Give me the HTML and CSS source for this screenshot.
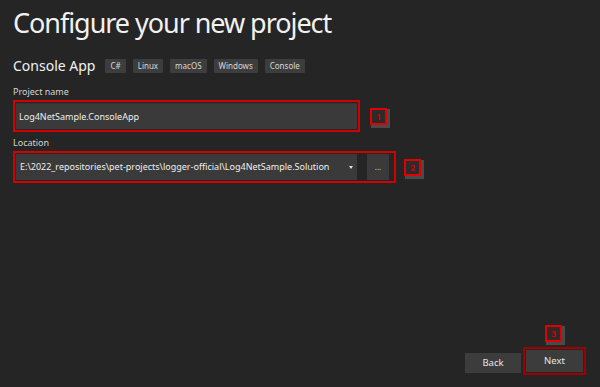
FILE: index.html
```html
<!DOCTYPE html>
<html>
<head>
<meta charset="utf-8">
<link rel="stylesheet" href="styles.css">
</head>
<body>
<div class="page">
  <h1 class="title">Configure your new project</h1>
  <div class="template">
    <span class="template-name">Console App</span>
    <span class="tag">C#</span>
    <span class="tag">Linux</span>
    <span class="tag">macOS</span>
    <span class="tag">Windows</span>
    <span class="tag">Console</span>
  </div>

  <div class="label label-name">Project name</div>
  <div class="row">
    <div class="hl hl-name">
      <div class="input input-name">Log4NetSample.ConsoleApp</div>
    </div>
    <div class="badge badge-1">1</div>
  </div>

  <div class="label label-loc">Location</div>
  <div class="row">
    <div class="hl hl-loc">
      <div class="input input-loc">
        <span>E:\2022_repositories\pet-projects\logger-official\Log4NetSample.Solution</span>
        <span class="caret"></span>
      </div>
      <div class="browse">...</div>
    </div>
    <div class="badge badge-2">2</div>
  </div>

  <div class="footer">
    <div class="btn btn-back">Back</div>
    <div class="next-wrap">
      <div class="badge badge-3">3</div>
      <div class="hl hl-next">
        <div class="btn">Next</div>
      </div>
    </div>
  </div>
</div>
</body>
</html>
```
FILE: styles.css
```css
html, body {
  margin: 0;
  padding: 0;
  background: #252526;
}
.page {
  box-sizing: border-box;
  height: 387px;
  padding: 0 13px;
  display: flex;
  flex-direction: column;
  font-family: "Noto Sans", "Open Sans", sans-serif;
  color: #e6e6e6;
}
.title {
  margin: 5px 0 0 0;
  font-weight: 400;
  font-size: 27px;
  line-height: 36px;
  color: #f1f1f1;
  letter-spacing: -1.05px;
}
.template {
  display: flex;
  align-items: center;
  margin-top: 17px;
  height: 16px;
}
.template-name {
  font-size: 14px;
  color: #f1f1f1;
  margin-right: 10px;
  line-height: 16px;
}
.tag {
  background: #3d3d3d;
  color: #d8d8d8;
  font-size: 8px;
  line-height: 14px;
  height: 14px;
  padding: 0 5px;
  margin-right: 7px;
  border-radius: 1px;
}
.label {
  font-size: 9px;
  line-height: 12px;
  color: #d4d4d4;
}
.label-name {
  margin-top: 12px;
}
.label-loc {
  margin-top: 5px;
}
.row {
  display: flex;
  align-items: center;
  margin-top: 2px;
}
.hl {
  border: 2px solid #d40000;
  padding: 1px;
  display: flex;
}
.input {
  background: #3a3a3a;
  color: #efefef;
  font-size: 9px;
  height: 26px;
  line-height: 26px;
  padding: 0 3px;
  box-sizing: border-box;
}
.input-name {
  width: 341px;
  border-top: 1px solid #333;
}
.input-loc {
  width: 341px;
  display: flex;
  justify-content: space-between;
  align-items: center;
  padding-left: 4px;
  padding-right: 4px;
}
.caret {
  width: 0;
  height: 0;
  border-left: 2.5px solid transparent;
  border-right: 2.5px solid transparent;
  border-top: 3px solid #e0e0e0;
}
.browse {
  width: 22px;
  height: 26px;
  background: #3a3a3a;
  margin-left: 10px;
  margin-right: 4px;
  color: #cfcfcf;
  font-size: 8px;
  text-align: center;
  line-height: 26px;
}
.badge {
  box-sizing: border-box;
  width: 17px;
  height: 17px;
  border: 2px solid #e00000;
  background: #2b2b2b;
  box-shadow: 2px 2px 0 1px #4a4a4a;
  color: #d00000;
  font-size: 9px;
  font-weight: 700;
  line-height: 13px;
  text-align: center;
}
.badge-1 {
  margin-left: 10px;
}
.badge-2 {
  margin-left: 8px;
}
.footer {
  margin-top: auto;
  margin-bottom: 12px;
  display: flex;
  justify-content: flex-end;
  align-items: flex-end;
  margin-right: 1px;
}
.btn {
  width: 56px;
  height: 20px;
  background: #3c3c3c;
  color: #e6e6e6;
  font-size: 9.5px;
  line-height: 20px;
  text-align: center;
}
.btn-back {
  margin-bottom: 2px;
}
.next-wrap {
  position: relative;
  margin-left: 2px;
}
.hl-next {
  border-color: #a00000;
  padding: 1px;
}
.hl-next .btn {
  width: 57px;
  height: 22px;
  line-height: 22px;
}
.badge-3 {
  position: absolute;
  left: 22px;
  top: -22px;
}
```
